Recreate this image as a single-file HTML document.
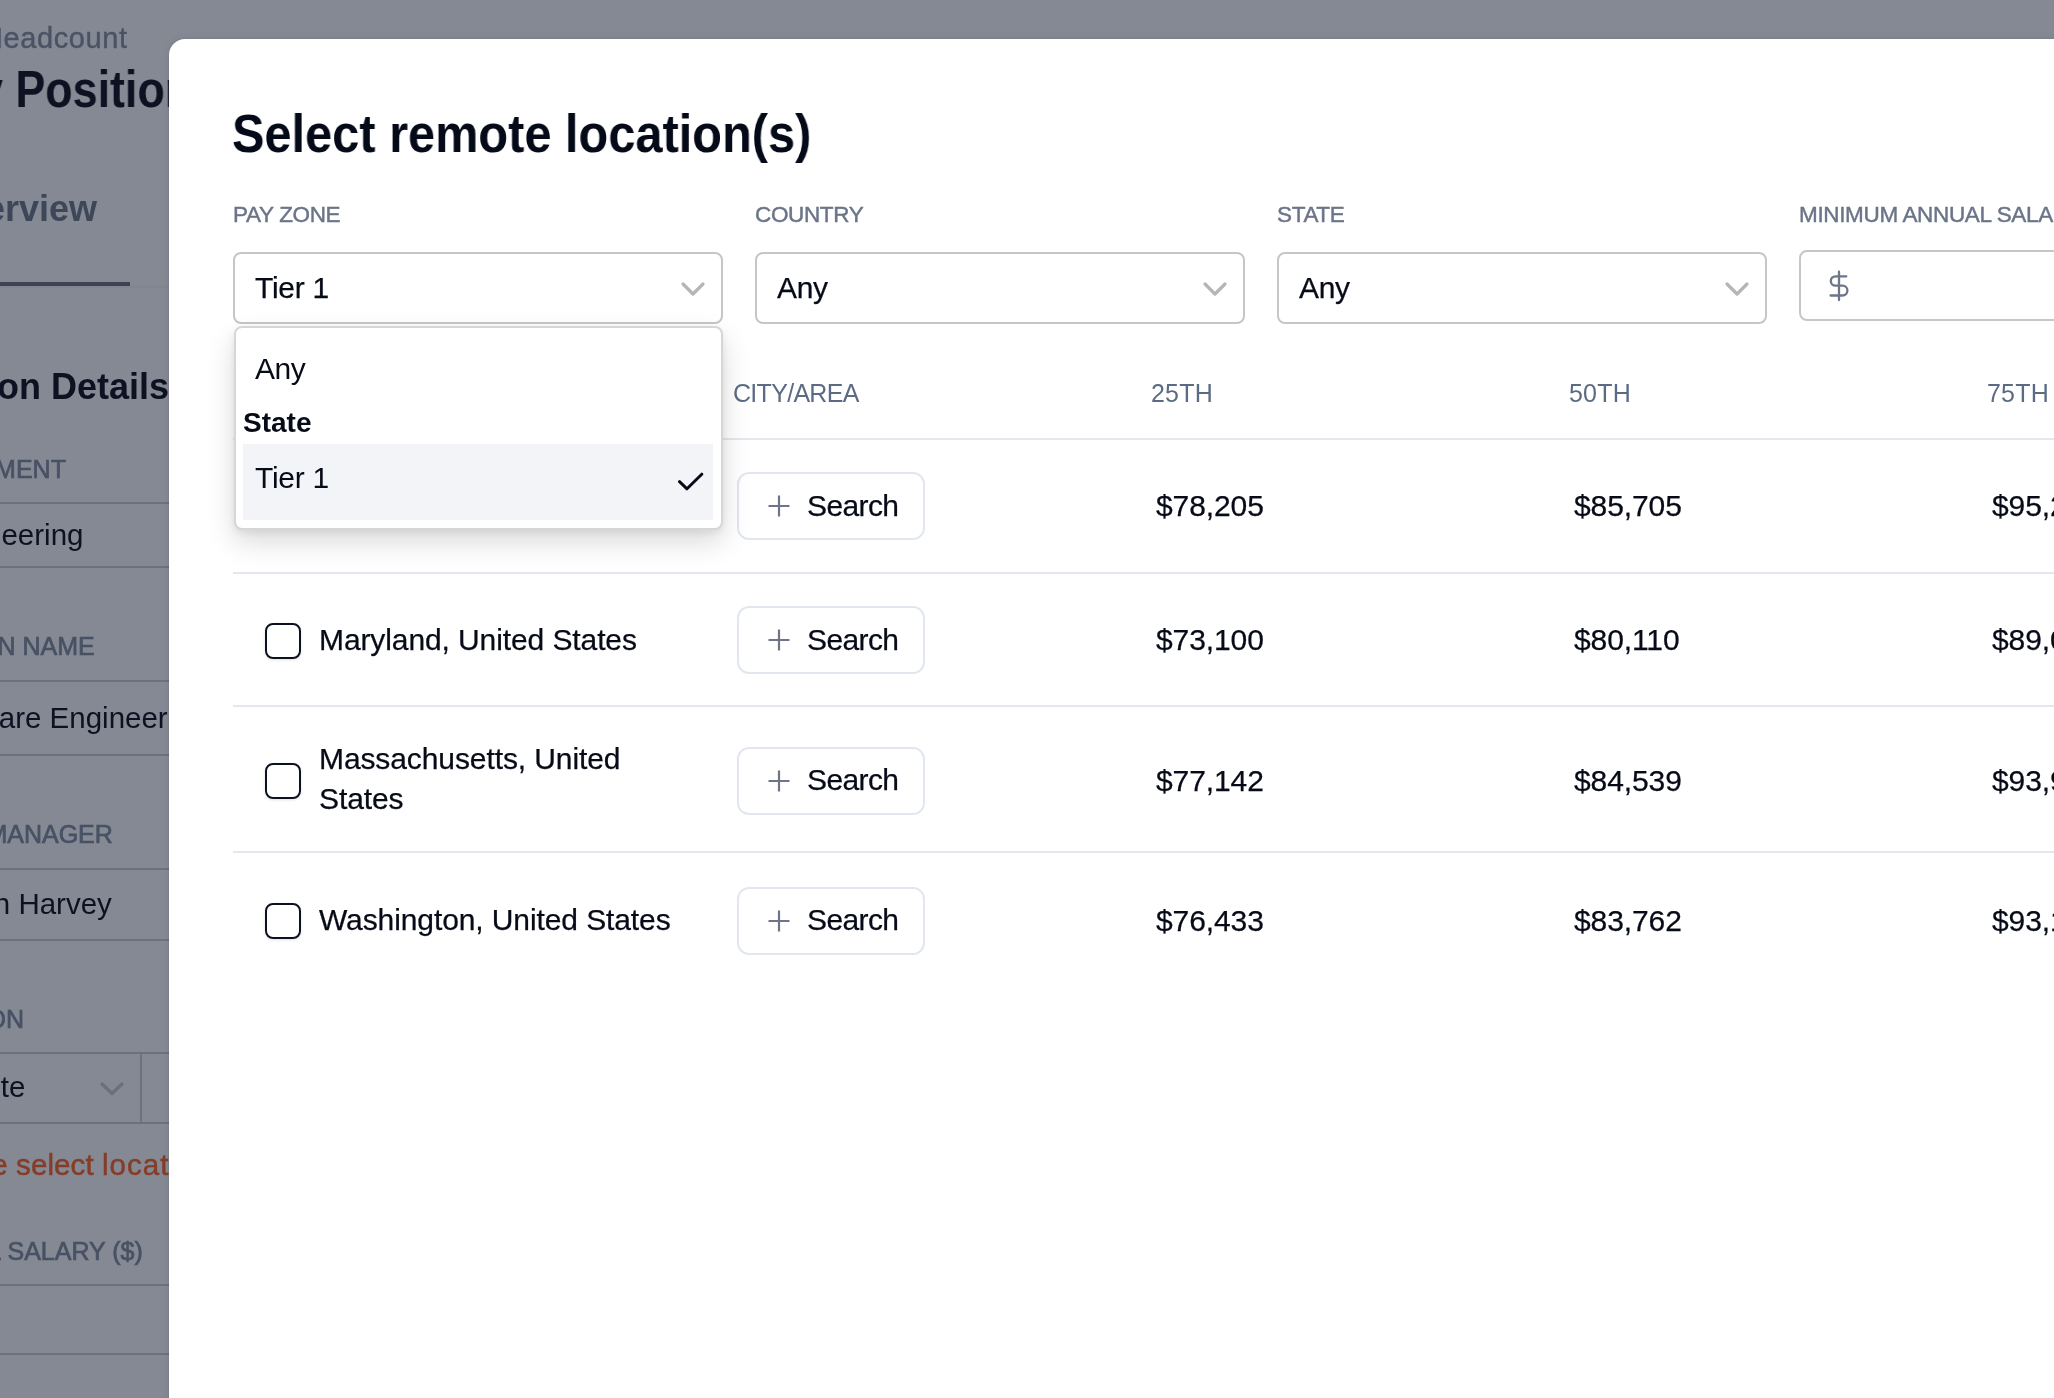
<!DOCTYPE html>
<html><head><meta charset="utf-8">
<style>
*{margin:0;padding:0;box-sizing:border-box}
html,body{width:2054px;height:1398px;overflow:hidden}
body{background:#858993;font-family:"Liberation Sans",sans-serif;position:relative}
.t,.r,.lbl,.th,.v,.s,.val,.loc{will-change:transform}
.sw{-webkit-text-stroke:0.25px currentColor}
.t{position:absolute;white-space:nowrap;line-height:1}
.r{position:absolute;white-space:nowrap;line-height:1;text-align:right}
.hl{position:absolute;left:0;width:169px;height:2px;background:#6d717b}
.lab{font-size:25px;color:#475265;-webkit-text-stroke:0.7px #475265}
.val0{font-size:29.5px;color:#0c1221}
#modal{position:absolute;left:169px;top:39px;width:2300px;height:1500px;background:#fff;border-radius:16px;box-shadow:0 0 3px rgba(0,0,0,.12),0 0 10px rgba(0,0,0,.06)}
.lbl{position:absolute;top:164.6px;font-size:22.5px;line-height:1;color:#6b7488;white-space:nowrap;letter-spacing:-0.35px;-webkit-text-stroke:0.45px #6b7488}
.sel{position:absolute;top:213px;width:490px;height:72px;border:2px solid #c6c6c6;border-radius:8px;background:#fff}
.sel .v{-webkit-text-stroke:0.25px #070b17;position:absolute;left:20px;top:18.5px;font-size:30px;line-height:1;color:#070b17;letter-spacing:-0.3px}
.chev{position:absolute;left:445px;top:27px}
.th{position:absolute;top:341.8px;font-size:25px;line-height:1;color:#5c6b85;white-space:nowrap;letter-spacing:-0.7px}
.rl{position:absolute;left:64px;width:2300px;height:2px;background:#e3e8ef}
.btn{position:absolute;left:568px;width:188px;height:68px;border:2px solid #e2e7ef;border-radius:12px;background:#fff}
.btn .p{position:absolute;left:28px;top:20px}
.btn .s{-webkit-text-stroke:0.25px #070b17;position:absolute;left:68px;top:16.5px;font-size:30px;line-height:1;color:#070b17;letter-spacing:-0.6px}
.val{-webkit-text-stroke:0.25px #070b17;position:absolute;font-size:30px;line-height:1;color:#070b17;white-space:nowrap;letter-spacing:-0.1px}
.cb{position:absolute;left:96px;width:36px;height:36px;border:2.5px solid #0b1120;border-radius:8px;box-shadow:0 1px 3px rgba(0,0,0,.12)}
.loc{-webkit-text-stroke:0.25px #070b17;position:absolute;left:149.5px;font-size:30px;line-height:40px;color:#070b17;white-space:nowrap;letter-spacing:-0.1px}
</style></head><body>
<!-- background page -->
<div class="t" style="left:-18px;top:23.5px;font-size:29px;color:#4a5366;letter-spacing:0.6px;-webkit-text-stroke:0.4px #4a5366">Headcount</div>
<div class="t" style="left:-22px;top:63.6px;font-size:51.5px;font-weight:bold;color:#0c1221;transform:scaleX(0.87);transform-origin:0 0">y Position</div>
<div class="r" style="right:1957px;top:190.6px;font-size:36px;font-weight:bold;color:#3d4759">Overview</div>
<div style="position:absolute;left:0;top:286px;width:169px;height:2px;background:#82868f"></div>
<div style="position:absolute;left:0;top:282px;width:130px;height:4px;background:#3c4353"></div>
<div class="t" style="left:-3.4px;top:368.5px;font-size:36px;font-weight:bold;color:#0c1221">on Details</div>
<div class="r lab" style="right:1988px;top:456.8px">DEPARTMENT</div>
<div class="hl" style="top:502px"></div>
<div class="r val0" style="right:1970.5px;top:520px">Engineering</div>
<div class="hl" style="top:566px"></div>
<div class="r lab" style="right:1959px;top:634.2px">POSITION NAME</div>
<div class="hl" style="top:680px"></div>
<div class="r val0" style="right:1886px;top:702.5px">Software Engineer</div>
<div class="hl" style="top:753.5px"></div>
<div class="r lab" style="right:1941px;top:822.2px">HIRING MANAGER</div>
<div class="hl" style="top:868px"></div>
<div class="r val0" style="right:1942px;top:889px">Jordan Harvey</div>
<div class="hl" style="top:938.5px"></div>
<div class="r lab" style="right:2030px;top:1006.6px">LOCATION</div>
<div class="hl" style="top:1052px"></div>
<div class="r val0" style="right:2029px;top:1072.2px">Remote</div>
<svg style="position:absolute;left:99px;top:1081px" width="26" height="16" viewBox="0 0 26 16"><path d="M3 3 L13 12.5 L23 3" fill="none" stroke="#6b6f78" stroke-width="3.2" stroke-linecap="round" stroke-linejoin="round"/></svg>
<div style="position:absolute;left:140px;top:1053px;width:2px;height:70px;background:#6d717b"></div>
<div class="hl" style="top:1122px"></div>
<div class="t" style="left:-83px;top:1150.4px;font-size:29.5px;color:#853d28;letter-spacing:0.1px;-webkit-text-stroke:0.5px #853d28">Please select <span style="letter-spacing:1px">location</span></div>
<div class="r lab" style="right:1911px;top:1238.8px">MINIMUM ANNUAL SALARY ($)</div>
<div class="hl" style="top:1284px"></div>
<div class="hl" style="top:1353px"></div>

<div id="modal">
  <div class="t" style="left:63px;top:67.9px;font-size:53px;font-weight:bold;color:#050a18;transform:scaleX(0.919);transform-origin:0 0">Select remote location(s)</div>
  <div class="lbl" style="left:63.5px">PAY ZONE</div>
  <div class="lbl" style="left:585.5px">COUNTRY</div>
  <div class="lbl" style="left:1107.5px">STATE</div>
  <div class="lbl" style="left:1629.5px">MINIMUM ANNUAL SALARY ($)</div>

  <div class="sel" style="left:64px"><div class="v">Tier 1</div><svg class="chev" width="26" height="16" viewBox="0 0 26 16"><path d="M3 3 L13 13 L23 3" fill="none" stroke="#b5b5b5" stroke-width="3.2" stroke-linecap="round" stroke-linejoin="round"/></svg></div>
  <div class="sel" style="left:586px"><div class="v">Any</div><svg class="chev" width="26" height="16" viewBox="0 0 26 16"><path d="M3 3 L13 13 L23 3" fill="none" stroke="#b5b5b5" stroke-width="3.2" stroke-linecap="round" stroke-linejoin="round"/></svg></div>
  <div class="sel" style="left:1108px"><div class="v">Any</div><svg class="chev" width="26" height="16" viewBox="0 0 26 16"><path d="M3 3 L13 13 L23 3" fill="none" stroke="#b5b5b5" stroke-width="3.2" stroke-linecap="round" stroke-linejoin="round"/></svg></div>
  <div class="sel" style="left:1630px;top:211px;width:700px;height:71px"><svg style="position:absolute;left:21px;top:14px" width="34" height="40" viewBox="0 0 34 40"><path d="M24.3 10.3H13.5A4.7 4.7 0 0 0 13.5 19.7H20.5A4.9 4.9 0 0 1 20.5 29.5H8.6M17 5.7V34" fill="none" stroke="#6e7587" stroke-width="2.3" stroke-linecap="round" stroke-linejoin="round"/></svg></div>

  <div class="th" style="left:564px">CITY/AREA</div>
  <div class="th" style="left:982px;letter-spacing:0.2px">25TH</div>
  <div class="th" style="left:1400px;letter-spacing:0.2px">50TH</div>
  <div class="th" style="left:1818px;letter-spacing:0.2px">75TH</div>
  <div class="rl" style="top:399px"></div>

  <!-- row 1 -->
  <div class="btn" style="top:433.3px"><svg class="p" width="24" height="24" viewBox="0 0 24 24"><path d="M12 1.5V22.5M1.5 12H22.5" stroke="#6e7587" stroke-width="2.2" stroke-linecap="butt"/></svg><div class="s">Search</div></div>
  <div class="val" style="left:987px;top:451.5px">$78,205</div>
  <div class="val" style="left:1405px;top:451.5px">$85,705</div>
  <div class="val" style="left:1823px;top:451.5px">$95,205</div>
  <div class="rl" style="top:533px"></div>

  <!-- row 2 -->
  <div class="cb" style="top:584px"></div>
  <div class="loc" style="top:580.9px">Maryland, United States</div>
  <div class="btn" style="top:567.3px"><svg class="p" width="24" height="24" viewBox="0 0 24 24"><path d="M12 1.5V22.5M1.5 12H22.5" stroke="#6e7587" stroke-width="2.2" stroke-linecap="butt"/></svg><div class="s">Search</div></div>
  <div class="val" style="left:987px;top:586.2px">$73,100</div>
  <div class="val" style="left:1405px;top:586.2px">$80,110</div>
  <div class="val" style="left:1823px;top:586.2px">$89,010</div>
  <div class="rl" style="top:666.2px"></div>

  <!-- row 3 -->
  <div class="cb" style="top:723.8px"></div>
  <div class="loc" style="top:700.4px;white-space:normal;width:360px">Massachusetts, United States</div>
  <div class="btn" style="top:707.6px"><svg class="p" width="24" height="24" viewBox="0 0 24 24"><path d="M12 1.5V22.5M1.5 12H22.5" stroke="#6e7587" stroke-width="2.2" stroke-linecap="butt"/></svg><div class="s">Search</div></div>
  <div class="val" style="left:987px;top:726.5px">$77,142</div>
  <div class="val" style="left:1405px;top:726.5px">$84,539</div>
  <div class="val" style="left:1823px;top:726.5px">$93,939</div>
  <div class="rl" style="top:812px"></div>

  <!-- row 4 -->
  <div class="cb" style="top:863.8px"></div>
  <div class="loc" style="top:860.7px">Washington, United States</div>
  <div class="btn" style="top:847.8px"><svg class="p" width="24" height="24" viewBox="0 0 24 24"><path d="M12 1.5V22.5M1.5 12H22.5" stroke="#6e7587" stroke-width="2.2" stroke-linecap="butt"/></svg><div class="s">Search</div></div>
  <div class="val" style="left:987px;top:866.8px">$76,433</div>
  <div class="val" style="left:1405px;top:866.8px">$83,762</div>
  <div class="val" style="left:1823px;top:866.8px">$93,162</div>

  <!-- dropdown -->
  <div id="dd" style="position:absolute;left:64.6px;top:287.4px;width:489px;height:204px;background:#fff;border:2px solid #d6d6d6;border-radius:8px;box-shadow:0 12px 28px rgba(0,0,0,.15),0 3px 8px rgba(0,0,0,.07)">
    <div class="t" style="left:19.5px;top:25.9px;font-size:30px;color:#070b17;letter-spacing:-0.5px">Any</div>
    <div class="t" style="left:7.2px;top:80.3px;font-size:28px;font-weight:bold;color:#070b17">State</div>
    <div style="position:absolute;left:7.4px;top:115.8px;width:470px;height:75.6px;background:#f2f4f7">
      <div class="t" style="left:12.3px;top:18.4px;font-size:30px;color:#070b17;letter-spacing:-0.3px">Tier 1</div>
      <svg style="position:absolute;left:432px;top:25px" width="30" height="24" viewBox="0 0 30 24"><path d="M4.5 12.7 L12 19.8 L26.8 5.2" fill="none" stroke="#070b17" stroke-width="3" stroke-linecap="round" stroke-linejoin="round"/></svg>
    </div>
  </div>
</div>
</body></html>
